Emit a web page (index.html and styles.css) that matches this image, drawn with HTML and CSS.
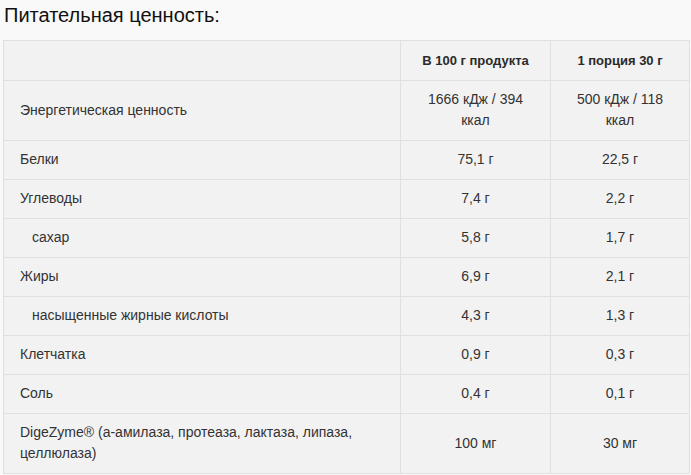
FILE: index.html
```html
<!DOCTYPE html>
<html lang="ru">
<head>
<meta charset="utf-8">
<title>Питательная ценность</title>
<link rel="stylesheet" href="styles.css">
</head>
<body>
<h2 class="title">Питательная ценность:</h2>
<table class="nutrition">
  <colgroup>
    <col class="c-name">
    <col class="c-100">
    <col class="c-portion">
  </colgroup>
  <thead>
    <tr><th></th><th>В 100 г продукта</th><th>1 порция 30 г</th></tr>
  </thead>
  <tbody>
    <tr><td>Энергетическая ценность</td><td>1666 кДж / 394 ккал</td><td>500 кДж / 118 ккал</td></tr>
    <tr><td>Белки</td><td>75,1 г</td><td>22,5 г</td></tr>
    <tr><td>Углеводы</td><td>7,4 г</td><td>2,2 г</td></tr>
    <tr><td class="sub">сахар</td><td>5,8 г</td><td>1,7 г</td></tr>
    <tr><td>Жиры</td><td>6,9 г</td><td>2,1 г</td></tr>
    <tr><td class="sub">насыщенные жирные кислоты</td><td>4,3 г</td><td>1,3 г</td></tr>
    <tr><td>Клетчатка</td><td>0,9 г</td><td>0,3 г</td></tr>
    <tr><td>Соль</td><td>0,4 г</td><td>0,1 г</td></tr>
    <tr><td>DigeZyme® (а-амилаза, протеаза, лактаза, липаза, целлюлаза)</td><td>100 мг</td><td>30 мг</td></tr>
  </tbody>
</table>
</body>
</html>
```
FILE: styles.css
```css
html, body {
  margin: 0;
  padding: 0;
  background: #f9f9f9;
}
body {
  font-family: "Liberation Sans", Arial, sans-serif;
  color: #333;
  padding: 0 2px 0 3px;
}
.title {
  margin: 0;
  padding: 3px 0 0 1px;
  font-size: 20px;
  line-height: 24px;
  font-weight: normal;
  color: #111;
  height: 37px;
}
.nutrition {
  border-collapse: collapse;
  width: 686px;
  table-layout: fixed;
  background: #f2f2f2;
  font-size: 14px;
  line-height: 21px;
}
.c-name { width: 397px; }
.c-100 { width: 150px; }
.c-portion { width: 139px; }
.nutrition th,
.nutrition td {
  border: 1px solid #e0e0e0;
  padding: 8px 16px 9px;
  text-align: center;
  vertical-align: middle;
}
.nutrition th {
  font-size: 13px;
  font-weight: bold;
  color: #2a2a2a;
  height: 22px;
}
.nutrition td:first-child {
  text-align: left;
}
.nutrition td.sub {
  padding-left: 28px;
}
```
